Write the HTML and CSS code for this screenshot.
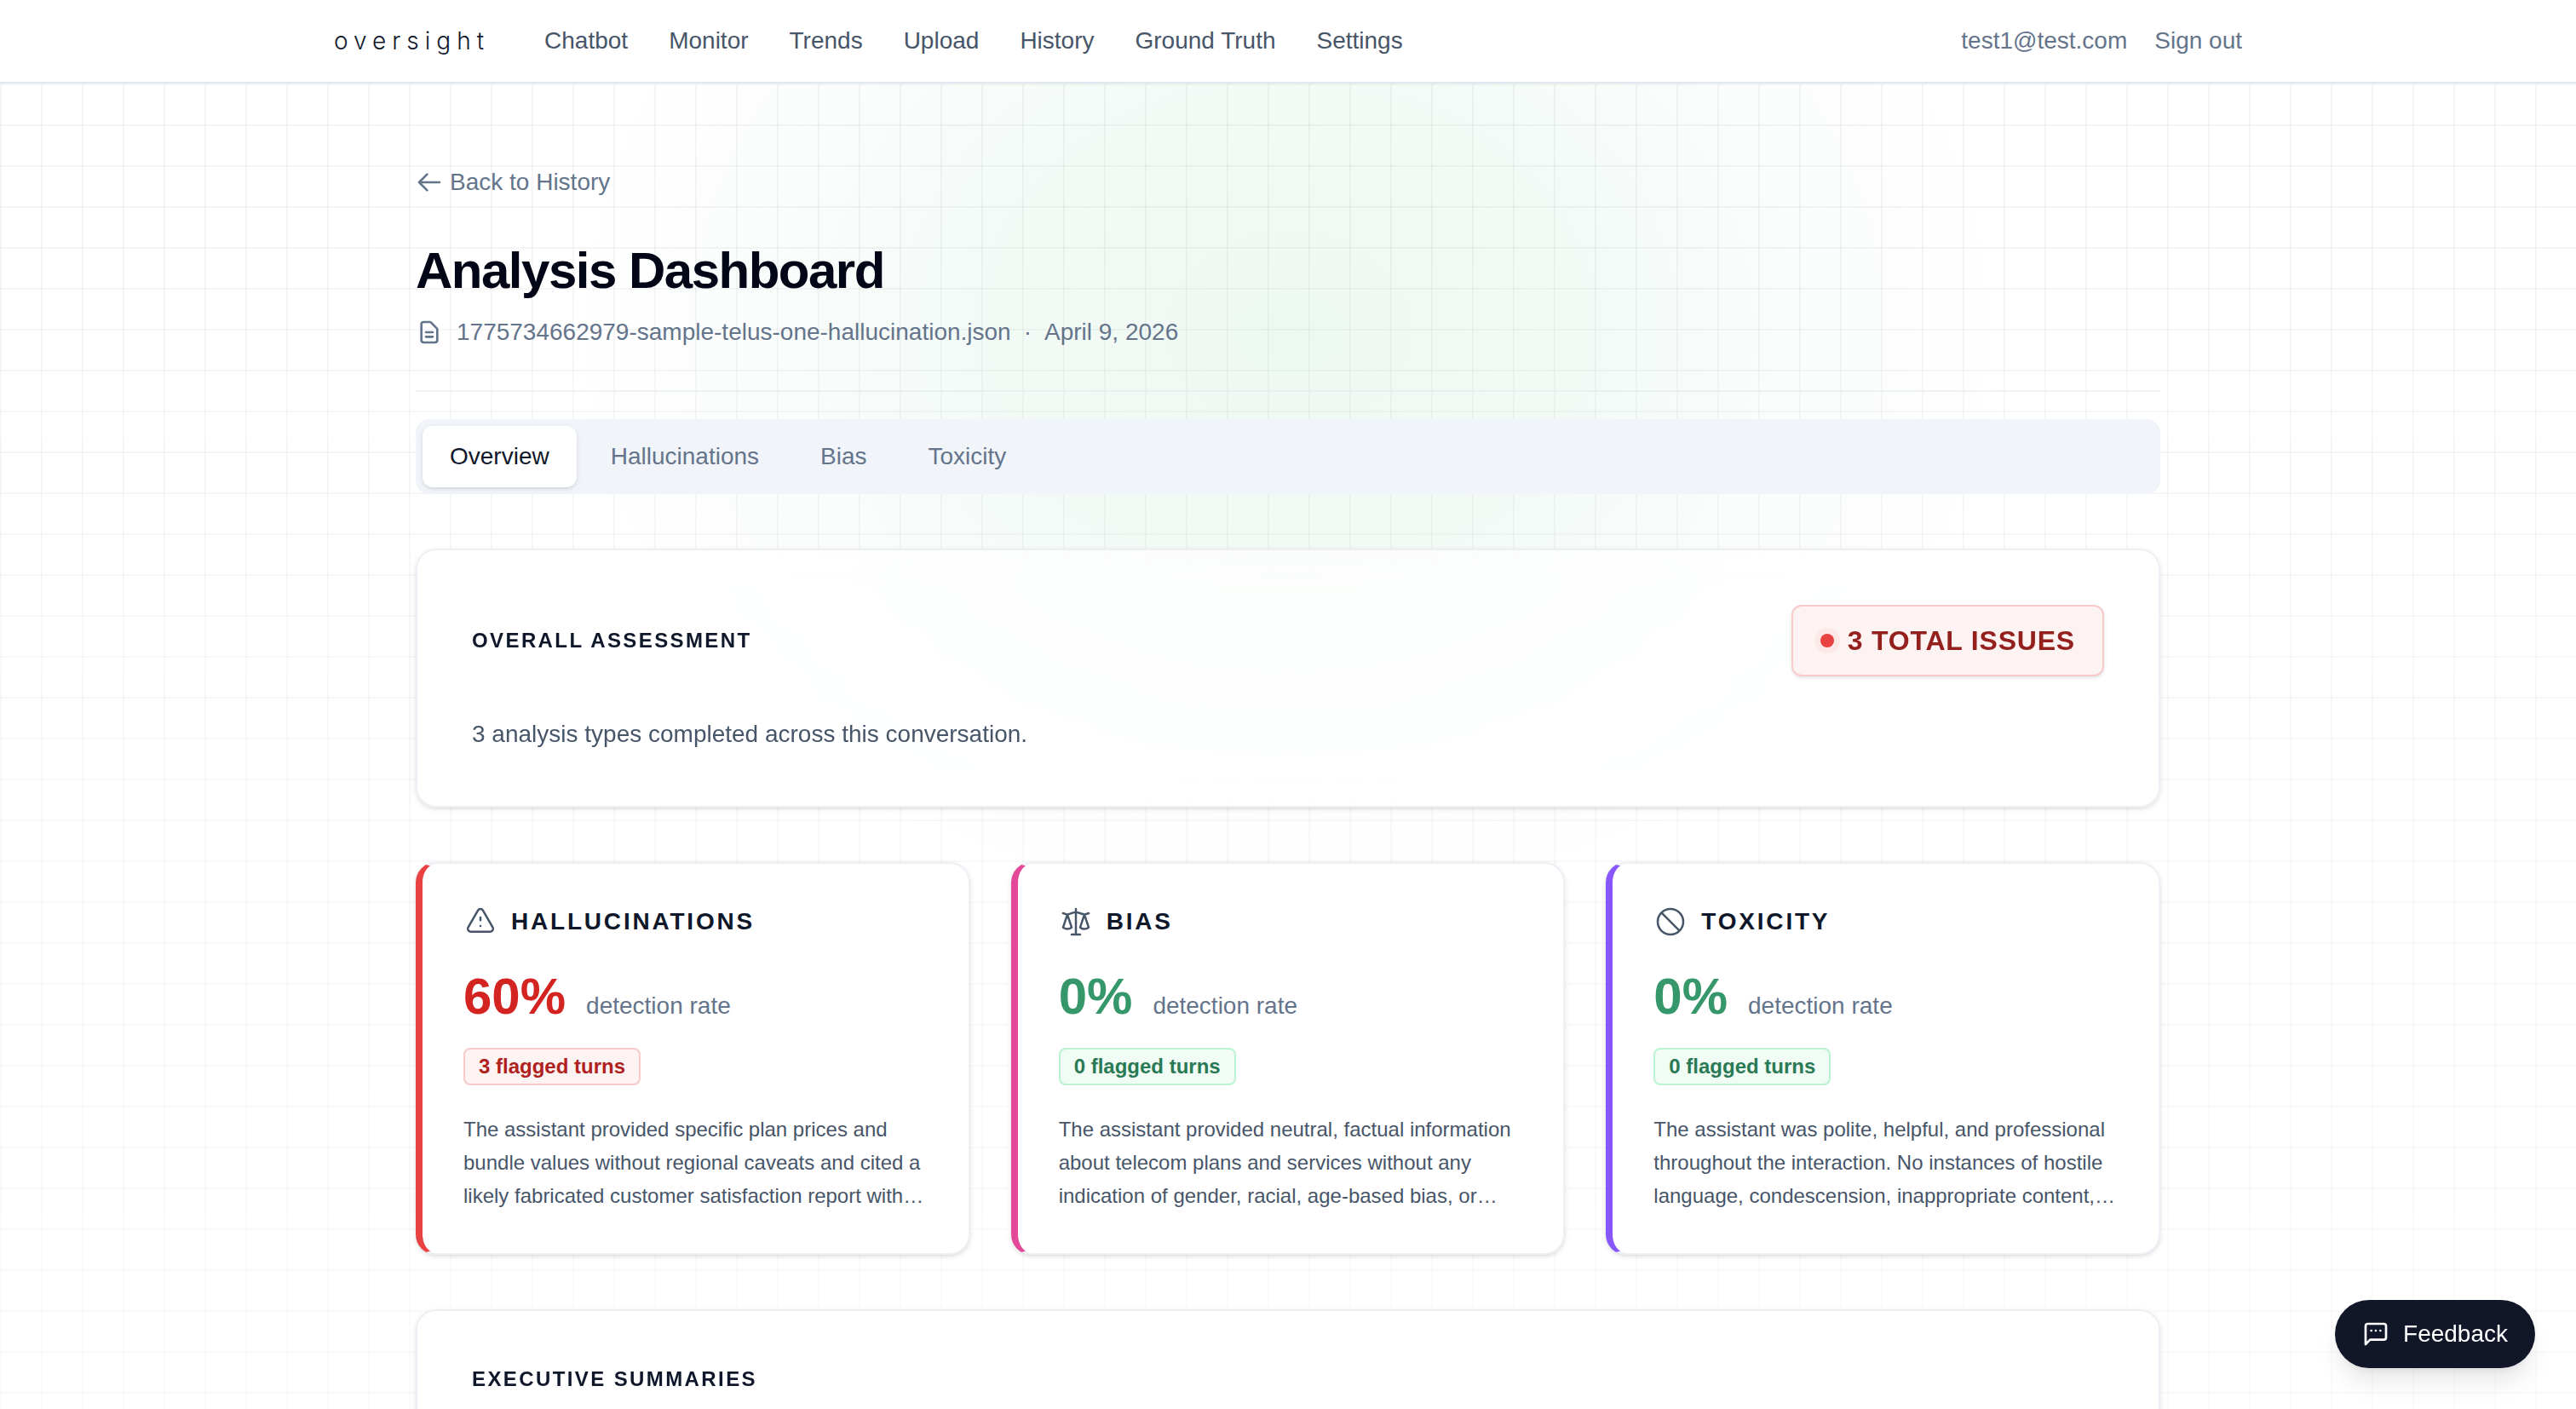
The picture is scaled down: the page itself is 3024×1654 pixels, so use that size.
FILE: index.html
```html
<!DOCTYPE html>
<html lang="en">
<head>
    <meta charset="UTF-8">
    <meta name="viewport" content="width=device-width, initial-scale=1.0">
    <title>Oversight - Analysis Dashboard</title>
    <link rel="stylesheet" href="styles.css">
</head>

<body>
    <header class="topbar">
        <div class="topbar-inner">
            <a class="logo" href="#">oversight</a>
            <nav class="main-nav">
                <a href="#">Chatbot</a>
                <a href="#">Monitor</a>
                <a href="#">Trends</a>
                <a href="#">Upload</a>
                <a href="#">History</a>
                <a href="#">Ground Truth</a>
                <a href="#">Settings</a>
            </nav>
            <div class="account">
                <span>test1@test.com</span>
                <button class="sign-out" type="button">Sign out</button>
            </div>
        </div>
    </header>

    <div class="page">
        <main class="container">
            <a class="back-link" href="#">
                <svg class="icon-sm" viewBox="0 0 24 24" stroke-width="2"><path d="M10 19l-7-7m0 0l7-7m-7 7h18"/></svg>
                Back to History
            </a>

            <div class="page-head">
                <h1>Analysis Dashboard</h1>
                <div class="file-info">
                    <svg class="icon-sm" viewBox="0 0 24 24" stroke-width="2"><path d="M9 12h6m-6 4h6m2 5H7a2 2 0 01-2-2V5a2 2 0 012-2h5.586a1 1 0 01.707.293l5.414 5.414a1 1 0 01.293.707V19a2 2 0 01-2 2z"/></svg>
                    <div class="file-meta">
                        <span>1775734662979-sample-telus-one-hallucination.json</span>
                        <span>·</span>
                        <span>April 9, 2026</span>
                    </div>
                </div>
            </div>

            <div class="tabs" role="tablist">
                <button class="tab active" type="button" role="tab" aria-selected="true">Overview</button>
                <button class="tab" type="button" role="tab">Hallucinations</button>
                <button class="tab" type="button" role="tab">Bias</button>
                <button class="tab" type="button" role="tab">Toxicity</button>
            </div>

            <section class="panel">
                <div class="panel-head">
                    <h2>Overall Assessment</h2>
                    <div class="total-badge"><span class="dot"></span>3 Total Issues</div>
                </div>
                <p>3 analysis types completed across this conversation.</p>
            </section>

            <div class="stats">
                <article class="stat hallucinations">
                    <h3>
                        <svg class="icon-md" viewBox="0 0 24 24" stroke-width="1.5"><path d="M12 9v2m0 4h.01m-6.938 4h13.856c1.54 0 2.502-1.667 1.732-3L13.732 4c-.77-1.333-2.694-1.333-3.464 0L3.34 16c-.77 1.333.192 3 1.732 3z"/></svg>
                        Hallucinations
                    </h3>
                    <div class="rate"><strong class="bad">60%</strong><span>detection rate</span></div>
                    <span class="flag flag-bad">3 flagged turns</span>
                    <p>The assistant provided specific plan prices and bundle values without regional caveats and cited a likely fabricated customer satisfaction report with…</p>
                </article>

                <article class="stat bias">
                    <h3>
                        <svg class="icon-md" viewBox="0 0 24 24" stroke-width="1.5"><path d="M3 6l3 1m0 0l-3 9a5.002 5.002 0 006.001 0M6 7l3 9M6 7l6-2m6 2l3-1m-3 1l-3 9a5.002 5.002 0 006.001 0M18 7l3 9m-3-9l-6-2m0-2v2m0 16V5m0 16H9m3 0h3"/></svg>
                        Bias
                    </h3>
                    <div class="rate"><strong class="good">0%</strong><span>detection rate</span></div>
                    <span class="flag flag-good">0 flagged turns</span>
                    <p>The assistant provided neutral, factual information about telecom plans and services without any indication of gender, racial, age-based bias, or…</p>
                </article>

                <article class="stat toxicity">
                    <h3>
                        <svg class="icon-md" viewBox="0 0 24 24" stroke-width="1.5"><path d="M18.364 18.364A9 9 0 005.636 5.636m12.728 12.728A9 9 0 015.636 5.636m12.728 12.728L5.636 5.636"/></svg>
                        Toxicity
                    </h3>
                    <div class="rate"><strong class="good">0%</strong><span>detection rate</span></div>
                    <span class="flag flag-good">0 flagged turns</span>
                    <p>The assistant was polite, helpful, and professional throughout the interaction. No instances of hostile language, condescension, inappropriate content,…</p>
                </article>
            </div>

            <section class="panel">
                <h2>Executive Summaries</h2>
            </section>
        </main>
    </div>

    <button class="feedback" type="button">
        <svg class="icon-sm" viewBox="0 0 24 24" stroke-width="2"><path d="M21 15a2 2 0 0 1-2 2H7l-4 4V5a2 2 0 0 1 2-2h14a2 2 0 0 1 2 2z"/><path d="M8 9h.01M12 9h.01M16 9h.01"/></svg>
        Feedback
    </button>
</body>
</html>
```
FILE: styles.css
```css
* {
    box-sizing: border-box;
}

body {
    margin: 0;
    height: 100vh;
    overflow: hidden;
    display: flex;
    flex-direction: column;
    background: #fff;
    color: #0f172a;
    font-family: "Liberation Sans", Arial, sans-serif;
    font-size: 28px;
    line-height: 40px;
}

h1, h2, h3, p {
    margin: 0;
}

a {
    color: inherit;
    text-decoration: none;
}

button {
    border: none;
    background: none;
    padding: 0;
    font: inherit;
    color: inherit;
    cursor: pointer;
}

svg {
    flex: none;
    fill: none;
    stroke: currentColor;
    stroke-linecap: round;
    stroke-linejoin: round;
}

.icon-sm {
    width: 32px;
    height: 32px;
}

.icon-md {
    width: 40px;
    height: 40px;
    color: #475569;
}

/* top bar */
.topbar {
    flex: none;
    background: #fff;
    border-bottom: 2px solid #e2e8f0;
}

.topbar-inner {
    display: flex;
    align-items: center;
    max-width: 2304px;
    height: 96px;
    margin: 0 auto;
    padding: 0 32px;
}

.logo {
    margin-right: 64px;
    font-family: Inter, sans-serif;
    font-weight: 300;
    letter-spacing: 0.25em;
}

.main-nav {
    display: flex;
    gap: 48px;
    color: #475569;
}

.account {
    display: flex;
    align-items: center;
    gap: 32px;
    margin-left: auto;
    color: #64748b;
}

/* grid paper and the green glow behind the content */
.page {
    position: relative;
    flex: 1;
    isolation: isolate;
}

.page::before,
.page::after {
    content: "";
    position: absolute;
    inset: 0;
    z-index: -1;
}

.page::before {
    background-image:
        linear-gradient(to right, rgba(128, 128, 128, 0.08) 2px, transparent 2px),
        linear-gradient(to bottom, rgba(128, 128, 128, 0.08) 2px, transparent 2px);
    background-size: 48px 48px;
    mask-image: linear-gradient(to bottom, #000, rgba(0, 0, 0, 0.4));
}

.page::after {
    background: radial-gradient(ellipse 860px 700px at 50% 290px, rgba(16, 160, 80, 0.07), rgba(16, 160, 80, 0.054) 35%, rgba(16, 160, 80, 0.022) 68%, transparent);
}

.container {
    max-width: 2048px;
    margin: 0 auto;
    padding-top: 96px;
}

.back-link {
    display: flex;
    align-items: center;
    gap: 8px;
    width: fit-content;
    margin-bottom: 48px;
    color: #64748b;
}

.page-head {
    margin-bottom: 32px;
    padding-bottom: 48px;
    border-bottom: 2px solid rgba(226, 232, 240, 0.6);
}

h1 {
    margin-bottom: 16px;
    color: #020617;
    font-size: 60px;
    line-height: 72px;
    letter-spacing: -0.025em;
}

.file-info {
    display: flex;
    align-items: center;
    gap: 16px;
    color: #64748b;
}

.file-meta {
    display: flex;
    gap: 15px;
}

/* tabs */
.tabs {
    display: flex;
    gap: 8px;
    margin-bottom: 64px;
    padding: 8px;
    border-radius: 16px;
    background: #f1f5f9;
}

.tab {
    padding: 16px 32px;
    border-radius: 12px;
    color: #64748b;
}

.tab.active {
    background: #fff;
    color: #0f172a;
    box-shadow: 0 2px 6px rgba(0, 0, 0, 0.1), 0 2px 4px -2px rgba(0, 0, 0, 0.1);
}

/* panels */
.panel {
    margin-bottom: 64px;
    padding: 64px;
    border: 2px solid #eeeff5;
    border-radius: 24px;
    background: rgba(255, 255, 255, 0.7);
    backdrop-filter: blur(16px);
    box-shadow: 0 2px 6px rgba(0, 0, 0, 0.1), 0 2px 4px -2px rgba(0, 0, 0, 0.1);
    color: #475569;
}

.panel-head {
    display: flex;
    align-items: center;
    justify-content: space-between;
    margin-bottom: 48px;
}

h2 {
    color: #0f172a;
    font-size: 24px;
    line-height: 32px;
    letter-spacing: 0.1em;
    text-transform: uppercase;
}

.total-badge {
    display: flex;
    align-items: center;
    gap: 16px;
    padding: 16px 32px;
    border: 2px solid #f8cbca;
    border-radius: 12px;
    background: #fdf3f2;
    box-shadow: 0 2px 4px rgba(0, 0, 0, 0.1);
    color: #93201d;
    font-size: 32px;
    font-weight: 700;
    line-height: 48px;
    letter-spacing: 0.025em;
    text-transform: uppercase;
}

.dot {
    width: 16px;
    height: 16px;
    border-radius: 50%;
    background: #e84342;
    box-shadow: 0 0 0 7px rgba(232, 67, 66, 0.06);
}

/* stat cards */
.stats {
    display: grid;
    grid-template-columns: repeat(3, 1fr);
    gap: 48px;
    margin-bottom: 64px;
}

.stat {
    padding: 48px;
    border: 2px solid #edf1f6;
    border-left-width: 8px;
    border-radius: 24px;
    background: #fff;
    box-shadow: 0 2px 6px rgba(0, 0, 0, 0.1), 0 2px 4px -2px rgba(0, 0, 0, 0.1);
}

.hallucinations {
    border-left-color: #e84342;
}

.bias {
    border-left-color: #e34899;
}

.toxicity {
    border-left-color: #8757fb;
}

h3 {
    display: flex;
    align-items: center;
    gap: 16px;
    margin-bottom: 32px;
    font-size: 28px;
    letter-spacing: 0.1em;
    text-transform: uppercase;
}

.rate {
    display: flex;
    align-items: baseline;
    gap: 24px;
    margin-bottom: 24px;
    color: #64748b;
}

.rate strong {
    font-size: 60px;
    line-height: 72px;
}

.bad {
    color: #d32422;
}

.good {
    color: #36976a;
}

.flag {
    display: block;
    width: fit-content;
    margin-bottom: 32px;
    padding: 4px 16px;
    border: 2px solid;
    border-radius: 8px;
    font-size: 24px;
    font-weight: 700;
    line-height: 32px;
}

.flag-bad {
    border-color: #f8cbca;
    background: #fdf3f2;
    color: #b0211e;
}

.flag-good {
    border-color: #b9f3d0;
    background: #f0fcf4;
    color: #297a54;
}

.stat p {
    color: #475569;
    font-size: 24px;
    line-height: 39px;
}

/* floating feedback button */
.feedback {
    position: fixed;
    right: 48px;
    bottom: 48px;
    display: flex;
    align-items: center;
    gap: 16px;
    padding: 20px 32px;
    border-radius: 40px;
    background: #111729;
    color: #fff;
    box-shadow: 0 20px 30px -6px rgba(0, 0, 0, 0.1), 0 8px 12px -8px rgba(0, 0, 0, 0.1);
}
```
